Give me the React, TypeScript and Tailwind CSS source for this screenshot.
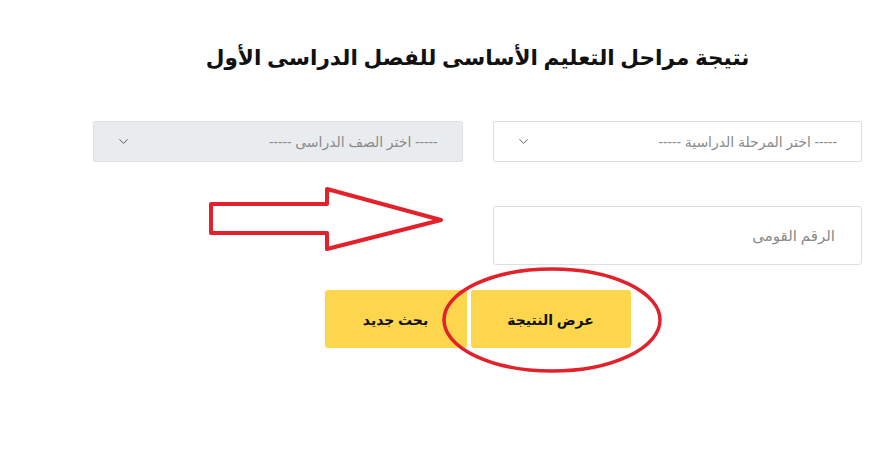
import { ChevronDown } from "lucide-react";

const font = { fontFamily: '"Noto Sans", "DejaVu Sans", sans-serif' };

// Select box with placeholder + chevron on the left (RTL)
function SelectBox({ label, disabled }: { label: string; disabled?: boolean }) {
  return (
    <div
      className={`flex h-[41px] items-center justify-between rounded-[2px] border border-[#dcdfe3] pr-[24px] pl-[22px] ${
        disabled ? "bg-[#e9ecef]" : "bg-white"
      }`}
    >
      <span className="text-[14px] text-[#8a8a8a]">{label}</span>
      <ChevronDown size={15} strokeWidth={1.4} className="text-[#444]" />
    </div>
  );
}

export default function App() {
  return (
    <div dir="rtl" style={font} className="relative h-[452px] w-[884px] overflow-hidden bg-white">
      <div className="mr-[22px] w-[769px]">
        {/* Title */}
        <h1 className="pt-[37px] text-center text-[21.6px] leading-[40px] font-bold text-[#111]">
          نتيجة مراحل التعليم الأساسى للفصل الدراسى الأول
        </h1>

        {/* Selects row */}
        <div className="mt-[44px] grid grid-cols-2 gap-[30px]">
          <SelectBox label="----- اختر المرحلة الدراسية -----" />
          <SelectBox label="----- اختر الصف الدراسى -----" disabled />
        </div>

        {/* National ID input */}
        <div className="mt-[44px] grid grid-cols-2 gap-[30px]">
          <div className="flex h-[59px] items-center rounded-[3px] border border-[#dcdfe3] bg-white pr-[26px]">
            <span className="text-[15px] text-[#8a8a8a]">الرقم القومى</span>
          </div>
        </div>

        {/* Buttons */}
        <div className="mt-[25px] flex justify-center gap-[4px]">
          <button className="h-[58px] w-[160px] rounded-[3px] bg-[#fdd64e] text-[14px] font-bold text-[#111]">
            عرض النتيجة
          </button>
          <button className="h-[58px] w-[142px] rounded-[3px] bg-[#fdd64e] text-[14px] font-bold text-[#111]">
            بحث جديد
          </button>
        </div>
      </div>

      {/* Red annotations drawn over the page */}
      <svg className="pointer-events-none absolute top-0 left-0" width="884" height="452">
        <polygon
          points="211,204 327,204 327,189 441,220 327,249 327,233 211,233"
          fill="none"
          stroke="#e2212a"
          strokeWidth="4"
          strokeLinejoin="round"
        />
        <ellipse cx="552" cy="320" rx="108" ry="51" fill="none" stroke="#e2212a" strokeWidth="3.5" />
      </svg>
    </div>
  );
}
